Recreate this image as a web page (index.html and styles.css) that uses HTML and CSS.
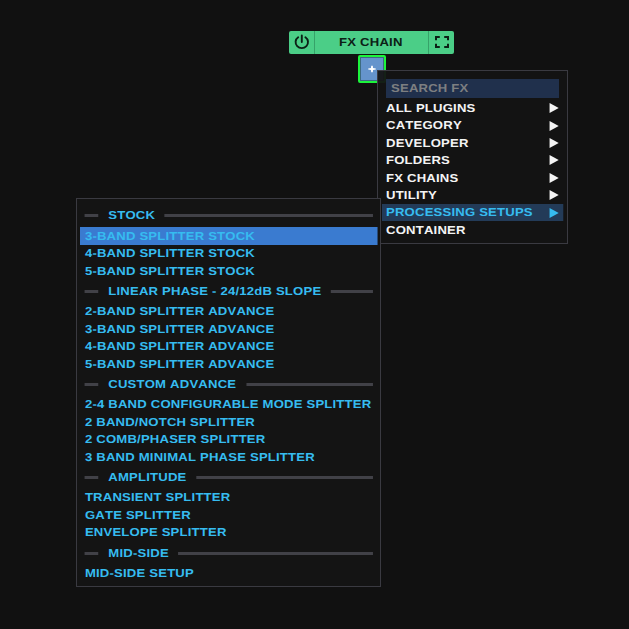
FILE: index.html
```
<!DOCTYPE html>
<html lang="en">
<head>
    <meta charset="UTF-8">
    <title>FX Chain</title>
    <link rel="stylesheet" href="styles.css">
</head>
<body>
    <div class="canvas">
        <div class="chain">
            <div class="chain-button">
                <svg width="16" height="16" viewBox="0 0 16 16" fill="none" stroke="#0c2016" stroke-width="1.9" stroke-linecap="round">
                    <path d="M4.2 3.2A6.2 6 0 1 0 11.4 3.2M7.8 1.5V8"/>
                </svg>
            </div>
            <div class="chain-title"><span class="wide">FX CHAIN</span></div>
            <div class="chain-button">
                <svg width="14" height="12" viewBox="0 0 14 12" fill="none" stroke="#0c2016" stroke-width="2">
                    <path d="M1 4.2V1H4.8M9.2 1H13V4.2M13 7.8V11H9.2M4.8 11H1V7.8"/>
                </svg>
            </div>
        </div>
        <div class="add-fx">
            <svg width="8" height="8" viewBox="0 0 8 8" fill="#fff"><path d="M3.2 0.8H4.8L5 3L7.8 3.4V4.6L5 5L4.8 7.2H3.2L3 5L0.2 4.6V3.4L3 3Z"/></svg>
        </div>

        <div class="menu main-menu">
            <div class="search"><span class="wide">SEARCH FX</span></div>
            <ul class="items">
                <li>ALL PLUGINS<i class="arrow"></i></li>
                <li>CATEGORY<i class="arrow"></i></li>
                <li>DEVELOPER<i class="arrow"></i></li>
                <li>FOLDERS<i class="arrow"></i></li>
                <li>FX CHAINS<i class="arrow"></i></li>
                <li>UTILITY<i class="arrow"></i></li>
                <li class="open">PROCESSING SETUPS<i class="arrow"></i></li>
                <li>CONTAINER</li>
            </ul>
        </div>

        <div class="menu sub-menu">
            <ul class="items">
                <li class="heading">STOCK</li>
                <li class="selected">3-BAND SPLITTER STOCK</li>
                <li>4-BAND SPLITTER STOCK</li>
                <li>5-BAND SPLITTER STOCK</li>
                <li class="heading">LINEAR PHASE - 24/12dB SLOPE</li>
                <li>2-BAND SPLITTER ADVANCE</li>
                <li>3-BAND SPLITTER ADVANCE</li>
                <li>4-BAND SPLITTER ADVANCE</li>
                <li>5-BAND SPLITTER ADVANCE</li>
                <li class="heading">CUSTOM ADVANCE</li>
                <li>2-4 BAND CONFIGURABLE MODE SPLITTER</li>
                <li>2 BAND/NOTCH SPLITTER</li>
                <li>2 COMB/PHASER SPLITTER</li>
                <li>3 BAND MINIMAL PHASE SPLITTER</li>
                <li class="heading">AMPLITUDE</li>
                <li>TRANSIENT SPLITTER</li>
                <li>GATE SPLITTER</li>
                <li>ENVELOPE SPLITTER</li>
                <li class="heading">MID-SIDE</li>
                <li>MID-SIDE SETUP</li>
            </ul>
        </div>
    </div>
</body>
</html>
```
FILE: styles.css
```
* {
    box-sizing: border-box;
}
body {
    margin: 0;
    background: #111;
    color: #f4f4f4;
    font: bold 11.5px "Liberation Sans", Arial, sans-serif;
    font-kerning: none;
    letter-spacing: 0.17px;
    text-rendering: geometricPrecision;
}
.canvas {
    position: relative;
    width: 629px;
    height: 629px;
    overflow: hidden;
}
/* extended lettering */
.wide {
    display: inline-block;
    padding-top: 1px;
    transform: scaleX(1.14);
}
.chain {
    position: absolute;
    left: 289px;
    top: 31px;
    width: 165px;
    height: 22.5px;
    display: flex;
    border-radius: 2px;
    background: #4bce87;
    color: #0c2016;
}
.chain-button {
    width: 25px;
    display: flex;
    align-items: center;
    justify-content: center;
}
.chain-title {
    flex: 1;
    display: flex;
    align-items: center;
    justify-content: center;
    padding-right: 1px;
    border: solid #36a269;
    border-width: 0 1px;
}
.add-fx {
    position: absolute;
    left: 358px;
    top: 55px;
    width: 28px;
    height: 28px;
    display: flex;
    align-items: center;
    justify-content: center;
    padding-right: 1px;
    border: 2px solid #1cf43c;
    border-radius: 2px;
    background: #6594cc;
    box-shadow: inset 0 0 0 1px #3d6b80;
}
.menu {
    position: absolute;
    border: 1px solid #3a3a41;
    background: rgba(20, 20, 20, 0.95);
}
.main-menu {
    left: 377px;
    top: 70px;
    width: 191px;
    height: 174px;
    padding: 8px 4px 0 4px;
}
.sub-menu {
    left: 76px;
    top: 197.5px;
    width: 305px;
    height: 389.5px;
    padding: 5.5px 3px 0;
    background: #141414;
    color: #36bcf0;
}
.search {
    height: 18.5px;
    margin: 0 4px 2px;
    padding-left: 4.5px;
    line-height: 18.5px;
    background: #20304c;
    color: #7d7f81;
}
.search .wide {
    transform-origin: left;
}
.items {
    width: calc(100% / 1.14);
    margin: 0;
    padding: 0;
    list-style: none;
    transform: scaleX(1.14);
    transform-origin: left top;
}
.items li {
    display: flex;
    align-items: center;
    justify-content: space-between;
    height: 17.4px;
    padding: 1.6px 4px 0 4.3px;
    line-height: 14px;
    white-space: nowrap;
}
.main-menu .items li {
    padding: 1.6px 4px 0 3.5px;
}
.items .heading {
    height: 23.4px;
    gap: 8.5px;
}
.heading::before,
.heading::after {
    content: "";
    height: 3px;
    margin-top: -1px;
    background: #414147;
}
.heading::before {
    width: 12px;
}
.heading::after {
    flex: 1;
}
.items .selected {
    background: #3a7bd0;
}
.items .open {
    background: #233b58;
    color: #36bcf0;
}
.arrow {
    margin-top: -1.6px;
    border-left: 8px solid currentColor;
    border-top: 5px solid transparent;
    border-bottom: 5px solid transparent;
}
```
